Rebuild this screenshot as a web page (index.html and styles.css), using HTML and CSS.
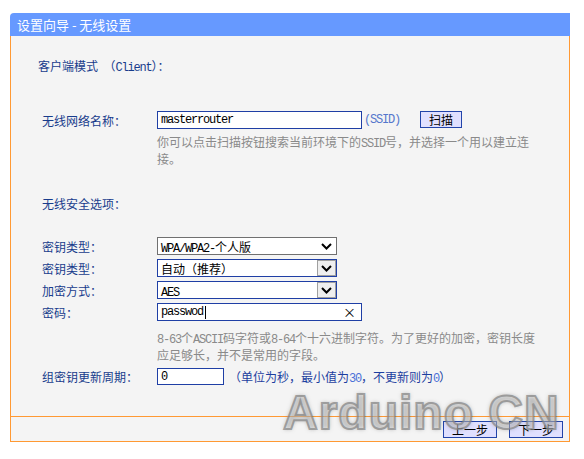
FILE: index.html
```html
<!DOCTYPE html>
<html lang="zh-CN">
<head>
<meta charset="utf-8">
<title>设置向导 - 无线设置</title>
<link rel="stylesheet" href="styles.css">
</head>
<body>
<div class="wizard">
  <div class="title">设置向导 - 无线设置</div>
  <div class="panel">
    <div class="content">
      <p class="mode">客户端模式&nbsp;&nbsp;（<span class="en">Client</span>）：</p>

      <div class="row ssid-row">
        <span class="label">无线网络名称：</span>
        <div class="input w-ssid"><span class="en">masterrouter</span></div>
        <span class="ssid en">(SSID)</span>
        <button class="btn scan">扫描</button>
      </div>
      <p class="hint">你可以点击扫描按钮搜索当前环境下的<span class="en">SSID</span>号，并选择一个用以建立连接。</p>

      <p class="section">无线安全选项：</p>

      <div class="row first">
        <span class="label">密钥类型：</span>
        <div class="select plain"><span class="val"><span class="en">WPA/WPA2-</span>个人版</span>
          <span class="arrow"><svg width="11" height="7" viewBox="0 0 11 7"><path d="M1 1 L5.5 5.5 L10 1" fill="none" stroke="#000" stroke-width="2"/></svg></span>
        </div>
      </div>
      <div class="row">
        <span class="label">密钥类型：</span>
        <div class="select"><span class="val">自动（推荐）</span>
          <span class="arrow box"><svg width="11" height="7" viewBox="0 0 11 7"><path d="M1 1 L5.5 5.5 L10 1" fill="none" stroke="#000" stroke-width="2"/></svg></span>
        </div>
      </div>
      <div class="row">
        <span class="label">加密方式：</span>
        <div class="select"><span class="val"><span class="en">AES</span></span>
          <span class="arrow box"><svg width="11" height="7" viewBox="0 0 11 7"><path d="M1 1 L5.5 5.5 L10 1" fill="none" stroke="#000" stroke-width="2"/></svg></span>
        </div>
      </div>
      <div class="row">
        <span class="label">密码：</span>
        <div class="input w-ssid pw"><span class="en">passwod</span><span class="caret"></span>
          <span class="clear">×</span>
        </div>
      </div>
      <p class="hint hint2"><span class="en">8-63</span>个<span class="en">ASCII</span>码字符或<span class="en">8-64</span>个十六进制字符。为了更好的加密，密钥长度应足够长，并不是常用的字段。</p>

      <div class="row group-row">
        <span class="label">组密钥更新周期：</span>
        <div class="input w-short"><span class="en">0</span></div>
        <span class="unit">（单位为秒，最小值为<span class="en num">30</span>，不更新则为<span class="en num">0</span>）</span>
      </div>
    </div>
    <div class="footer">
      <button class="btn step">上一步</button>
      <button class="btn step">下一步</button>
    </div>
  </div>
  <div class="watermark">Arduino CN</div>
</div>
</body>
</html>
```
FILE: styles.css
```css
html, body {
  margin: 0;
  padding: 0;
  background: #ffffff;
}
body {
  font-family: "Noto Sans CJK SC", "Liberation Sans", sans-serif;
  font-size: 12px;
  color: #183c8c;
}
.en {
  font-family: "Liberation Mono", monospace;
  font-size: 12px;
  letter-spacing: -1.2px;
  line-height: 1;
}
.wizard {
  position: relative;
  width: 560px;
  margin: 13px 0 0 10px;
}
.title {
  height: 23px;
  line-height: 23px;
  background: #6699ff;
  color: #ffffff;
  font-size: 13px;
  padding-left: 7px;
  border-top-left-radius: 4px;
}
.panel {
  background: #f4f4f4;
  border: 1px solid #ff9933;
  border-top: none;
}
.content {
  height: 380px;
  box-sizing: border-box;
  padding: 21px 0 0 31px;
}
p { margin: 0; }
.mode {
  margin-left: -4px;
  height: 17px;
  line-height: 17px;
}
.row {
  display: flex;
  align-items: center;
  height: 18px;
  margin-top: 4px;
}
.row.first { margin-top: 25px; }
.ssid-row { margin-top: 37px; }
.label {
  width: 115px;
  flex: none;
  line-height: 17px;
}
.input {
  box-sizing: border-box;
  height: 18px;
  border: 1px solid #1f3fa5;
  background: #ffffff;
  color: #000;
  padding-left: 3px;
  display: flex;
  align-items: center;
  position: relative;
}
.w-ssid { width: 205px; }
.w-short { width: 67px; height: 17px; }
.ssid {
  color: #5577cc;
  margin-left: 2px;
}
.btn {
  font-family: "Noto Sans CJK SC", sans-serif;
  font-size: 12px;
  color: #000;
  background: #e0e0ff;
  border: 1px solid #2244aa;
  padding: 0;
  height: 17px;
  line-height: 14px;
  box-sizing: border-box;
  cursor: pointer;
}
.scan {
  width: 42px;
  margin-left: 20px;
  align-self: flex-start;
}
.hint {
  margin: 4px 0 0 115px;
  width: 380px;
  height: 34px;
  line-height: 17px;
  color: #8a8a8a;
}
.hint2 { margin-top: 8px; }
.section {
  margin-top: 28px;
  height: 17px;
  line-height: 17px;
}
.select {
  box-sizing: border-box;
  width: 180px;
  height: 18px;
  border: 1px solid #1f3fa5;
  background: #fff;
  color: #000;
  display: flex;
  align-items: center;
}
.select.plain { border-color: #707070; }
.select .val {
  flex: 1;
  padding-left: 3px;
  white-space: nowrap;
}
.arrow {
  width: 19px;
  height: 100%;
  display: flex;
  align-items: center;
  justify-content: center;
  box-sizing: border-box;
}
.arrow.box {
  background: #efefef;
  border: 1px solid #a0a0a0;
}
.pw .caret {
  width: 1px;
  height: 13px;
  background: #000;
  margin-left: 2px;
}
.clear {
  position: absolute;
  right: 5px;
  top: 0;
  line-height: 16px;
  font-size: 13px;
  color: #000;
}
.group-row { margin-top: 5px; height: 17px; }
.unit {
  margin-left: 5px;
  color: #1c3ea0;
}
.unit .num { color: #4a70d8; }
.footer {
  border-top: 1px solid #ff9933;
  height: 25px;
  display: flex;
  justify-content: flex-end;
  align-items: flex-start;
  gap: 12px;
  padding: 4px 6px 0 0;
  box-sizing: border-box;
}
.step { width: 54px; }
.watermark {
  position: absolute;
  left: 273px;
  top: 372px;
  font-family: "Liberation Sans", sans-serif;
  font-size: 48px;
  font-weight: bold;
  letter-spacing: 1px;
  color: rgba(255, 255, 255, 0.3);
  -webkit-text-stroke: 2px rgba(130, 130, 130, 0.7);
  text-shadow: 0 0 4px rgba(90, 90, 90, 0.5);
  pointer-events: none;
  white-space: nowrap;
}
```
